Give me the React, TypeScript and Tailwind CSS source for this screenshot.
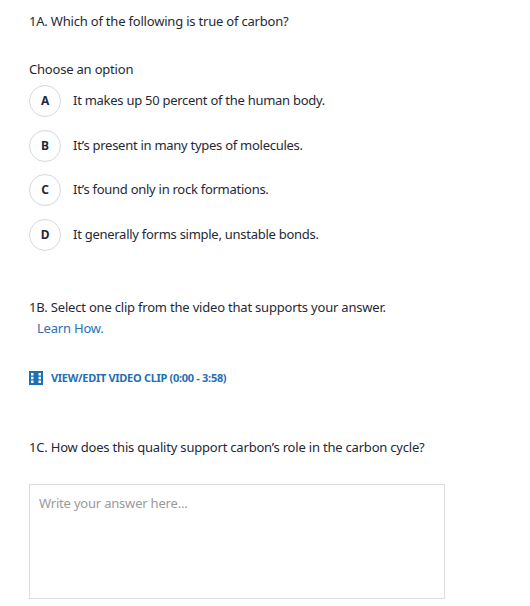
// App.tsx
const options = [
  { letter: 'A', text: 'It makes up 50 percent of the human body.' },
  { letter: 'B', text: 'It’s present in many types of molecules.' },
  { letter: 'C', text: 'It’s found only in rock formations.' },
  { letter: 'D', text: 'It generally forms simple, unstable bonds.' },
]

function FilmIcon() {
  return (
    <svg width="14" height="14" viewBox="0 0 14 14" className="shrink-0">
      <rect width="14" height="14" fill="#1f6fb5" />
      <rect x="2" y="2" width="2.5" height="2.5" fill="#fff" />
      <rect x="2" y="5.75" width="2.5" height="2.5" fill="#fff" />
      <rect x="2" y="9.5" width="2.5" height="2.5" fill="#fff" />
      <rect x="9.5" y="2" width="2.5" height="2.5" fill="#fff" />
      <rect x="9.5" y="5.75" width="2.5" height="2.5" fill="#fff" />
      <rect x="9.5" y="9.5" width="2.5" height="2.5" fill="#fff" />
    </svg>
  )
}

export default function App() {
  return (
    <div className="h-[606px] w-[530px] overflow-hidden bg-white pl-[29px] font-['Noto_Sans',sans-serif] text-[13px] tracking-[-0.2px] text-[#1f2937]">
      <p className="pt-[11px] leading-5">1A. Which of the following is true of carbon?</p>

      <p className="mt-[28px] leading-5">Choose an option</p>
      <div className="mt-[6px] flex flex-col gap-[12.6px]">
        {options.map(o => (
          <div key={o.letter} className="flex items-center">
            <span className="flex h-8 w-8 items-center justify-center rounded-full border border-[#d5d8de] text-xs font-bold">
              {o.letter}
            </span>
            <span className="mb-[2px] ml-3 leading-5 tracking-[-0.27px]">{o.text}</span>
          </div>
        ))}
      </div>

      <p className="mt-[46px] leading-5">1B. Select one clip from the video that supports your answer.</p>
      <a className="mt-[1px] block pl-2 leading-5 text-[#2a6fb5]">Learn How.</a>

      <div className="mt-[32px] flex items-center gap-2 text-[11px] font-bold tracking-[-0.3px] text-[#1f6fb5]">
        <FilmIcon />
        <span>VIEW/EDIT VIDEO CLIP (0:00 - 3:58)</span>
      </div>

      <p className="mt-[51px] leading-5">1C. How does this quality support carbon’s role in the carbon cycle?</p>

      <div className="mt-[27px] h-[115px] w-[416px] border border-[#dddddd] px-[9px] py-[8px] leading-5 text-[#9a9a9a]">
        Write your answer here...
      </div>
    </div>
  )
}
